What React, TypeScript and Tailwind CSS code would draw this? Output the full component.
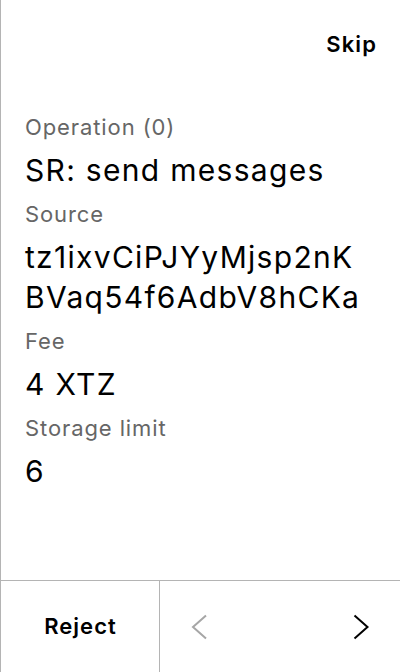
import React from "react";

const Field = ({ label, value, first }: { label: string; value: React.ReactNode; first?: boolean }) => (
  <div className={first ? "" : "mt-[10px]"}>
    <div className="whitespace-nowrap text-[22px] leading-[28px] tracking-[0.9px] text-[#666666]">{label}</div>
    <div className="mt-[9px] whitespace-nowrap text-[30px] leading-[40px] tracking-[1.3px] text-black">{value}</div>
  </div>
);

export default function App() {
  return (
    <div
      className="flex h-[672px] w-[400px] flex-col border-l border-[#b4b4b4] bg-white"
      style={{ fontFamily: "Inter, 'Noto Sans', sans-serif" }}
    >
      <div className="flex flex-1 flex-col px-[24px]">
        <div className="mt-[30px] flex justify-end">
          <span className="mr-[-1px] text-[22px] font-semibold leading-[28px] tracking-[1.1px] text-black">Skip</span>
        </div>
        <div className="mt-[55px]">
          <Field first label="Operation (0)" value="SR: send messages" />
          <Field
            label="Source"
            value={
              <>
                tz1ixvCiPJYyMjsp2nK
                <br />
                BVaq54f6AdbV8hCKa
              </>
            }
          />
          <Field label="Fee" value="4 XTZ" />
          <Field label="Storage limit" value="6" />
        </div>
      </div>
      <div className="flex h-[92px] border-t border-[#b4b4b4]">
        <div className="flex w-[159px] items-center justify-center border-r border-[#b4b4b4]">
          <span className="ml-[1px] text-[22px] font-semibold tracking-[1px] text-black">Reject</span>
        </div>
        <div className="flex flex-1 items-center justify-between pl-[27px] pr-[27px]">
          <svg width="24" height="28" viewBox="0 0 24 28" fill="none">
            <polyline points="19,2.5 6,14 19,25.5" stroke="#a6a6a6" strokeWidth="2" />
          </svg>
          <svg width="24" height="28" viewBox="0 0 24 28" fill="none">
            <polyline points="5.5,2.5 18.5,14 5.5,25.5" stroke="#000000" strokeWidth="2" />
          </svg>
        </div>
      </div>
    </div>
  );
}
